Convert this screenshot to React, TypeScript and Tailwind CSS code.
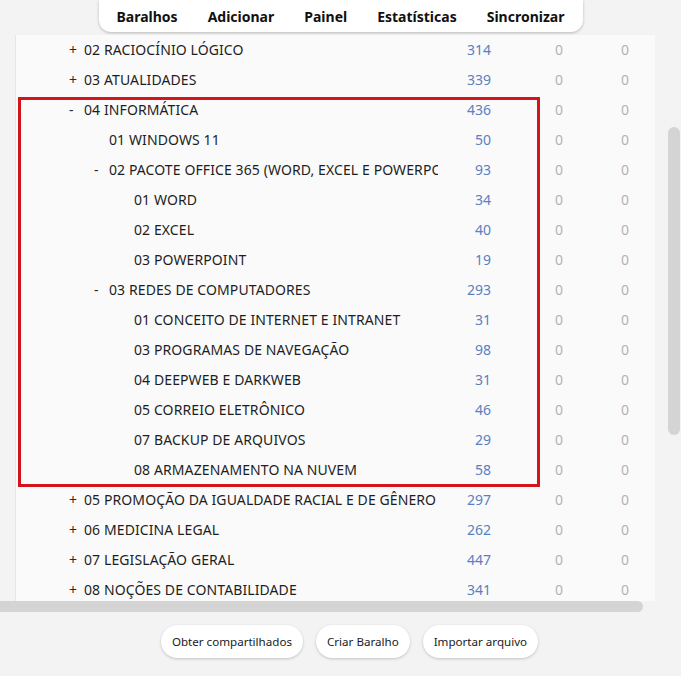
import React from 'react';

type Deck = {
  name: string;
  level: number;
  toggle: '+' | '-' | '';
  total: number;
};

const decks: Deck[] = [
  { name: '02 RACIOCÍNIO LÓGICO', level: 0, toggle: '+', total: 314 },
  { name: '03 ATUALIDADES', level: 0, toggle: '+', total: 339 },
  { name: '04 INFORMÁTICA', level: 0, toggle: '-', total: 436 },
  { name: '01 WINDOWS 11', level: 1, toggle: '', total: 50 },
  { name: '02 PACOTE OFFICE 365 (WORD, EXCEL E POWERPOINT)', level: 1, toggle: '-', total: 93 },
  { name: '01 WORD', level: 2, toggle: '', total: 34 },
  { name: '02 EXCEL', level: 2, toggle: '', total: 40 },
  { name: '03 POWERPOINT', level: 2, toggle: '', total: 19 },
  { name: '03 REDES DE COMPUTADORES', level: 1, toggle: '-', total: 293 },
  { name: '01 CONCEITO DE INTERNET E INTRANET', level: 2, toggle: '', total: 31 },
  { name: '03 PROGRAMAS DE NAVEGAÇÃO', level: 2, toggle: '', total: 98 },
  { name: '04 DEEPWEB E DARKWEB', level: 2, toggle: '', total: 31 },
  { name: '05 CORREIO ELETRÔNICO', level: 2, toggle: '', total: 46 },
  { name: '07 BACKUP DE ARQUIVOS', level: 2, toggle: '', total: 29 },
  { name: '08 ARMAZENAMENTO NA NUVEM', level: 2, toggle: '', total: 58 },
  { name: '05 PROMOÇÃO DA IGUALDADE RACIAL E DE GÊNERO', level: 0, toggle: '+', total: 297 },
  { name: '06 MEDICINA LEGAL', level: 0, toggle: '+', total: 262 },
  { name: '07 LEGISLAÇÃO GERAL', level: 0, toggle: '+', total: 447 },
  { name: '08 NOÇÕES DE CONTABILIDADE', level: 0, toggle: '+', total: 341 },
];

const indent = ['pl-[53px]', 'pl-[78px]', 'pl-[103px]'];

const tabs = ['Baralhos', 'Adicionar', 'Painel', 'Estatísticas', 'Sincronizar'];

function DeckRow({ deck }: { deck: Deck }) {
  return (
    <div className="flex h-[30px] items-center text-[14px] leading-[30px]">
      <div className={`flex w-[422px] shrink-0 overflow-hidden whitespace-nowrap ${indent[deck.level]}`}>
        <span className="w-[15px] shrink-0 text-[#2a2a2a]">{deck.toggle}</span>
        <span className="text-[#1e1e1e] tracking-[0.1px]">{deck.name}</span>
      </div>
      <div className="w-[53px] shrink-0 text-right text-[#5b7fc1]">{deck.total}</div>
      <div className="ml-[35px] w-[66px] shrink-0 text-center text-[#b3b3b3]">0</div>
      <div className="w-[66px] shrink-0 text-center text-[#b3b3b3]">0</div>
    </div>
  );
}

export default function App() {
  return (
    <div
      className="flex h-[676px] w-[681px] flex-col overflow-hidden bg-[#f3f3f3]"
      style={{ fontFamily: '"Noto Sans", "Open Sans", sans-serif' }}
    >
      {/* top toolbar */}
      <div className="flex h-[35px] shrink-0 justify-center">
        <nav className="flex h-[32px] w-[484px] items-center justify-center gap-[30px] rounded-b-[12px] bg-white text-[14px] font-bold text-[#111] shadow-[0_1px_3px_rgba(0,0,0,0.25)]">
          {tabs.map((t) => (
            <span key={t}>{t}</span>
          ))}
        </nav>
      </div>

      {/* deck tree with scrollbars */}
      <div className="flex h-[566px] shrink-0">
        <div className="relative ml-[15px] w-[640px] shrink-0 overflow-hidden border-l border-[#e6e6e6] bg-[#fafafa]">
          {decks.map((d) => (
            <DeckRow key={d.name} deck={d} />
          ))}
          <div className="pointer-events-none absolute left-[2px] top-[62px] h-[390px] w-[522px] border-[3px] border-[#d4141c]" />
        </div>
        <div className="flex-1" />
        <div className="flex w-[13px] shrink-0 flex-col pr-[1px]">
          <div className="h-[92px]" />
          <div className="h-[308px] rounded-[6px] bg-[#d4d4d4]" />
        </div>
      </div>
      <div className="flex h-[11px] shrink-0">
        <div className="w-[643px] rounded-r-[6px] bg-[#d4d4d4]" />
      </div>

      {/* bottom actions */}
      <div className="flex flex-1 justify-center gap-[13px] pl-[18px] pt-[13px]">
        {['Obter compartilhados', 'Criar Baralho', 'Importar arquivo'].map((b) => (
          <button
            key={b}
            className="h-[33px] rounded-full bg-white px-[11px] text-[11.6px] text-[#1a1a1a] shadow-[0_1px_3px_rgba(0,0,0,0.2)]"
          >
            {b}
          </button>
        ))}
      </div>
    </div>
  );
}
